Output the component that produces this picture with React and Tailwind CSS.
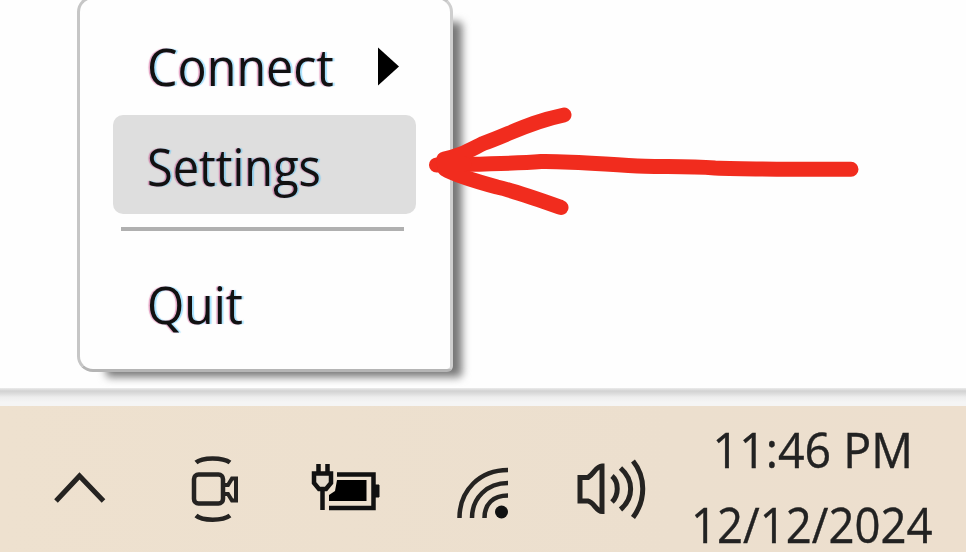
import React from "react";

const fringe =
  "inline-block origin-left whitespace-nowrap [text-shadow:-1.5px_0_1px_rgba(190,30,110,0.4),2px_0_1px_rgba(60,190,255,0.45)]";

function Menu() {
  return (
    <div className="relative -mt-[5px] ml-[77px] h-[376px] w-[376px]">
      <div className="absolute top-[26px] left-[29px] h-[355px] w-[356px] rounded-[4px] bg-[#777] blur-[4px]" />
      <nav className="relative flex h-full w-full flex-col rounded-[16px] rounded-br-[6px] border-[3px] border-[#c6c6c6] border-r-[#cfcfcf] border-b-[#b5b5b5] bg-[#fefefe] px-[33px] pt-[17px] text-[51px] leading-[100px] text-[#111]">
        <div className="flex h-[99px] items-center pl-[34px]">
          <span className={`${fringe} w-[230px] scale-x-[0.95]`}>Connect</span>
          <svg className="mt-[2px] h-[39px] w-[22px] shrink-0" viewBox="0 0 22 39">
            <path d="M1 0.5 L22 19.5 L1 38.5 Z" fill="#000" />
          </svg>
        </div>
        <div className="flex h-[99px] w-[303px] items-center rounded-[10px] bg-[#dedede] pt-[2px] pl-[34px]">
          <span className={`${fringe} scale-x-[0.92]`}>Settings</span>
        </div>
        <div className="mt-[13px] ml-[8px] h-[4px] w-[283px] shrink-0 bg-[#b0b0b0]" />
        <div className="mt-[23px] flex h-[100px] items-center pl-[34px]">
          <span className={`${fringe} scale-x-[0.94]`}>Quit</span>
        </div>
      </nav>
    </div>
  );
}

function Arrow() {
  return (
    <svg
      className="absolute top-[100px] left-[420px] h-[120px] w-[450px]"
      viewBox="420 100 450 120"
      fill="none"
      stroke="#f12c1e"
      strokeWidth="15"
      strokeLinecap="round"
      strokeLinejoin="round"
    >
      <path d="M436.500 165 C470 164 510 164 541 161.500 C575 161 610 165 645 166.300 C670 166.800 690 166 715 168 C750 169.500 800 169.300 851 169.300" />
      <path d="M564 115 C530 122 510 134 483 143.500 C468 151 460 156 444 159 L445 169 C455 175 475 181 497 187 C515 191 540 200 561 207.500" />
      <path d="M444 164 L464 164" />
    </svg>
  );
}

function Taskbar() {
  return (
    <footer className="flex h-[146px] w-[966px] bg-[linear-gradient(90deg,#eee1cf,#ecdfce_70%,#eddfce)] text-[#222]">
      <svg className="h-[146px] w-[680px] shrink-0" viewBox="0 406 680 146" fill="none" stroke="#252321">
        <path d="M56 501 L79.500 476 L103.500 501" strokeWidth="5" />
        <g strokeWidth="4.500">
          <rect x="194" y="474.500" width="29" height="29" rx="4.500" />
          <path d="M224 485 H228 L232 478.500 H236 V500.500 H232 L228 494 H224" strokeWidth="4" />
          <path d="M196 462.500 C202 457 223 457 230 462.500 M196 515.500 C202 521 223 521 230 515.500" />
        </g>
        <g stroke="#111" strokeWidth="4.500">
          <path d="M337 474.500 H373.500 V508 H329" />
          <path d="M374 485 H379 V497 H374 Z" fill="#111" strokeWidth="1" />
          <path d="M337 480 H366.500 V501 H329 V495 L335 491 Z" fill="#000" stroke="none" />
          <path d="M318.500 464 V473 M327.500 464 V473 M322.500 490 V510" />
          <path d="M314 473.500 H331 V483 L326 489 H319 L314 483 Z" fill="#e4dbcd" />
        </g>
        <g strokeWidth="4.500">
          <path d="M459.500 518 C459.500 490 480 470 508 470" />
          <path d="M472 518 C472 498 487 483 508 483" />
          <path d="M484.500 518 C484.500 504 493 495.500 508 495.500" />
          <circle cx="501.500" cy="512" r="6.500" fill="#111" stroke="none" />
        </g>
        <g strokeWidth="5">
          <path d="M580 477.500 H588 C594 474 596 466 602 466 V511.500 C596 511.500 594 502 588 501 H580 Z" />
          <path d="M612 476 C619 482 619 495 612 502" />
          <path d="M620.500 468 C634 480 634 498 620.500 509.500" />
          <path d="M633 461 C646 477 646 500 633 517.500" />
        </g>
      </svg>
      <div className="flex h-[146px] w-[266px] flex-col items-center gap-[21px] pt-[16px] text-[50px] leading-[54px] whitespace-nowrap [-webkit-text-stroke:0.4px_#222]">
        <span className="scale-x-[0.93]">11:46 PM</span>
        <span className="-ml-[2px] scale-x-[0.91]">12/12/2024</span>
      </div>
    </footer>
  );
}

export default function App() {
  return (
    <div className="h-[560px] w-[974px] overflow-hidden bg-white font-['Open_Sans','Noto_Sans',sans-serif]">
      <main className="relative h-[388px] w-[966px] bg-[#fefefe] pt-px">
        <Menu />
        <Arrow />
      </main>
      <div className="h-[18px] w-[966px] bg-[linear-gradient(180deg,#ececec_0,#d2d2d2_3px,#dedede_6px,#ededed_9px,#f5f5f5_14px,#f5f5f5)]" />
      <Taskbar />
    </div>
  );
}
